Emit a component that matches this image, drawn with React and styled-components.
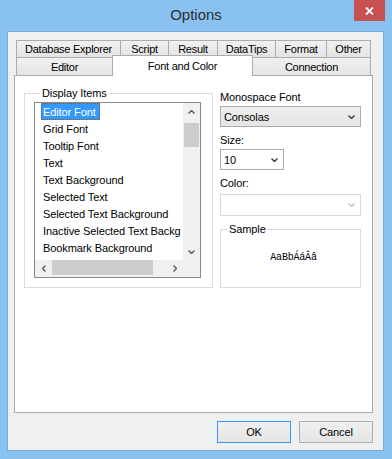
import React from "react";
import styled, { createGlobalStyle } from "styled-components";

const GlobalStyle = createGlobalStyle`
  html, body {
    margin: 0;
    padding: 0;
  }
  body {
    font-family: "Liberation Sans", Arial, sans-serif;
  }
`;

const Window = styled.div`
  width: 392px;
  height: 459px;
  background: #89c1f0;
  display: flex;
  flex-direction: column;
  font-family: "Liberation Sans", Arial, sans-serif;
  font-size: 11px;
  letter-spacing: -0.1px;
  color: #000;
`;

const TitleBar = styled.div`
  height: 31px;
  flex: 0 0 31px;
  display: grid;
  grid-template-columns: 1fr auto 1fr;
  align-items: start;
`;

const Title = styled.div`
  grid-column: 2;
  margin-top: 6px;
  font-size: 15px;
  line-height: 17px;
  letter-spacing: 0;
  color: #2e2e2e;
`;

const CloseButton = styled.div`
  grid-column: 3;
  justify-self: end;
  width: 31px;
  height: 21px;
  margin-right: 7px;
  background: #c75050;
  display: flex;
  align-items: center;
  justify-content: center;
`;

const Client = styled.div`
  flex: 1;
  margin: 0 8px 8px 7px;
  border: 1px solid #7ea9d4;
  background: #f0f0f0;
  padding: 8px 0 0 6px;
  display: flex;
  flex-direction: column;
`;

const TabStrip = styled.div`
  box-sizing: border-box;
  width: 359px;
  padding: 0 3px 0 2px;
  letter-spacing: -0.25px;
`;

const TabRow = styled.div`
  display: flex;
  height: ${(p) => p.$h}px;
`;

const Tab = styled.div`
  box-sizing: border-box;
  flex: 0 0 ${(p) => p.$w}px;
  height: ${(p) => p.$h}px;
  margin-right: -1px;
  border: 1px solid #acacac;
  border-bottom: none;
  background: linear-gradient(#f0f0f0, #e4e4e4);
  display: flex;
  align-items: center;
  justify-content: center;
  white-space: nowrap;

  &:last-child {
    margin-right: 0;
  }

  ${(p) =>
    p.$selected &&
    `
    height: 21px;
    margin-top: -2px;
    background: #fff;
    position: relative;
    z-index: 1;
  `}
`;

const Panel = styled.div`
  box-sizing: border-box;
  width: 359px;
  height: 338px;
  border: 1px solid #acacac;
  background: #fff;
  padding: 10px 0 0 9px;
  display: flex;
  align-items: flex-start;
  gap: 7px;
`;

const Group = styled.fieldset`
  box-sizing: border-box;
  margin: 0;
  min-width: 0;
  width: ${(p) => p.$w}px;
  height: ${(p) => p.$h}px;
  border: 1px solid #dcdcdc;
  padding: 0 0 0 ${(p) => p.$pl || 0}px;
`;

const Legend = styled.legend`
  margin-left: 6px;
  padding: 0 2px;
  line-height: 14px;
`;

const ListBox = styled.div`
  box-sizing: border-box;
  margin-top: 2px;
  width: 167px;
  height: 176px;
  border: 1px solid #828790;
  display: grid;
  grid-template-columns: 1fr 17px;
  grid-template-rows: 1fr 17px;
`;

const Items = styled.div`
  overflow: hidden;
  background: #fff;
`;

const Item = styled.div`
  height: 17px;
  padding-left: 6px;
  white-space: nowrap;
  display: flex;
`;

const ItemText = styled.span`
  box-sizing: border-box;
  height: 17px;
  line-height: 16px;
  padding: 0 3px 0 1px;
  border: 1px ${(p) => (p.$selected ? "dotted #8a5a1a" : "solid transparent")};
  background: ${(p) => (p.$selected ? "#3399ff" : "transparent")};
  color: ${(p) => (p.$selected ? "#fff" : "#000")};
`;

const VScroll = styled.div`
  background: #f0f0f0;
  display: flex;
  flex-direction: column;
`;

const HScroll = styled.div`
  background: #f0f0f0;
  display: flex;
`;

const ArrowButton = styled.div`
  flex: 0 0 17px;
  display: flex;
  align-items: center;
  justify-content: center;
`;

const VThumb = styled.div`
  height: 24px;
  margin: 3px 1px 0 1px;
  background: #cdcdcd;
`;

const HThumb = styled.div`
  width: 101px;
  margin: 0 0 2px 0;
  background: #cdcdcd;
`;

const Track = styled.div`
  flex: 1;
`;

const Corner = styled.div`
  background: #f0f0f0;
`;

const Column = styled.div`
  width: 141px;
  margin-top: 4px;
  display: flex;
  flex-direction: column;
`;

const Label = styled.div`
  line-height: 14px;
  margin-top: ${(p) => p.$mt || 0}px;
`;

const Combo = styled.div`
  box-sizing: border-box;
  width: ${(p) => p.$w}px;
  height: ${(p) => p.$h || 21}px;
  margin-top: ${(p) => p.$mt || 0}px;
  border: 1px solid ${(p) => (p.$disabled ? "#d9d9d9" : "#acacac")};
  background: ${(p) =>
    p.$dropList ? "linear-gradient(#efefef, #e5e5e5)" : "#fff"};
  padding: 0 5px 0 3px;
  display: flex;
  align-items: center;
  justify-content: space-between;
`;

const SampleGroup = styled(Group)`
  margin-top: 6px;
`;

const SampleText = styled.div`
  margin-top: 16px;
  padding-left: 6px;
  text-align: center;
  font-family: "Liberation Mono", "Courier New", monospace;
  font-size: 10px;
  line-height: 12px;
  letter-spacing: -0.2px;
  color: #000;
`;

const ButtonBar = styled.div`
  width: 359px;
  margin-top: 8px;
  display: flex;
  justify-content: flex-end;
  gap: 8px;
`;

const Button = styled.button`
  box-sizing: border-box;
  width: 74px;
  height: 22px;
  padding: 0;
  border: 1px solid ${(p) => (p.$default ? "#3399ff" : "#acacac")};
  background: linear-gradient(#f0f0f0, #e5e5e5);
  font: inherit;
  letter-spacing: inherit;
  color: #000;
`;

function Chevron({ dir = "down", color = "#606060", w = 7, h = 4 }) {
  const pts = {
    up: "0.5,3.5 3.5,0.5 6.5,3.5",
    down: "0.5,0.5 3.5,3.5 6.5,0.5",
    left: "3.5,0.5 0.5,3.5 3.5,6.5",
    right: "0.5,0.5 3.5,3.5 0.5,6.5",
  }[dir];
  const horizontal = dir === "left" || dir === "right";
  return (
    <svg
      width={horizontal ? h : w}
      height={horizontal ? w : h}
      viewBox={horizontal ? "0 0 4 7" : "0 0 7 4"}
    >
      <polyline points={pts} fill="none" stroke={color} strokeWidth="1.5" />
    </svg>
  );
}

const topTabs = [
  { label: "Database Explorer", w: 105 },
  { label: "Script", w: 49 },
  { label: "Result", w: 50 },
  { label: "DataTips", w: 59 },
  { label: "Format", w: 52 },
  { label: "Other", w: 45 },
];

const bottomTabs = [
  { label: "Editor", w: 97 },
  { label: "Font and Color", w: 141, selected: true },
  { label: "Connection", w: 119 },
];

// the long entry is shown as far as the list's visible width reaches
const displayItems = [
  "Editor Font",
  "Grid Font",
  "Tooltip Font",
  "Text",
  "Text Background",
  "Selected Text",
  "Selected Text Background",
  "Inactive Selected Text Backg",
  "Bookmark Background",
];

function App() {
  return (
    <Window>
      <GlobalStyle />
      <TitleBar>
        <Title>Options</Title>
        <CloseButton>
          <svg width="9" height="8" viewBox="0 0 9 8">
            <path d="M1 0.5 L8 7.5 M8 0.5 L1 7.5" stroke="#fff" strokeWidth="1.8" />
          </svg>
        </CloseButton>
      </TitleBar>
      <Client>
        <TabStrip>
          <TabRow $h={17}>
            {topTabs.map((t) => (
              <Tab key={t.label} $w={t.w} $h={17}>
                {t.label}
              </Tab>
            ))}
          </TabRow>
          <TabRow $h={18}>
            {bottomTabs.map((t) => (
              <Tab key={t.label} $w={t.w} $h={18} $selected={t.selected}>
                {t.label}
              </Tab>
            ))}
          </TabRow>
        </TabStrip>
        <Panel>
          <Group $w={189} $h={202} $pl={9}>
            <Legend>Display Items</Legend>
            <ListBox>
              <Items>
                {displayItems.map((item, i) => (
                  <Item key={item}>
                    <ItemText $selected={i === 0}>{item}</ItemText>
                  </Item>
                ))}
              </Items>
              <VScroll>
                <ArrowButton>
                  <Chevron dir="up" />
                </ArrowButton>
                <VThumb />
                <Track />
                <ArrowButton>
                  <Chevron dir="down" />
                </ArrowButton>
              </VScroll>
              <HScroll>
                <ArrowButton>
                  <Chevron dir="left" />
                </ArrowButton>
                <HThumb />
                <Track />
                <ArrowButton>
                  <Chevron dir="right" />
                </ArrowButton>
              </HScroll>
              <Corner />
            </ListBox>
          </Group>
          <Column>
            <Label>Monospace Font</Label>
            <Combo $w={141} $mt={2} $dropList>
              <span>Consolas</span>
              <Chevron color="#444" />
            </Combo>
            <Label $mt={6}>Size:</Label>
            <Combo $w={64} $mt={2}>
              <span>10</span>
              <Chevron color="#444" />
            </Combo>
            <Label $mt={6}>Color:</Label>
            <Combo $w={141} $h={22} $mt={4} $disabled>
              <span />
              <Chevron color="#c4c4c4" />
            </Combo>
            <SampleGroup $w={141} $h={66}>
              <Legend>Sample</Legend>
              <SampleText>AaBbÁáÂâ</SampleText>
            </SampleGroup>
          </Column>
        </Panel>
        <ButtonBar>
          <Button $default>OK</Button>
          <Button>Cancel</Button>
        </ButtonBar>
      </Client>
    </Window>
  );
}

export default App;
